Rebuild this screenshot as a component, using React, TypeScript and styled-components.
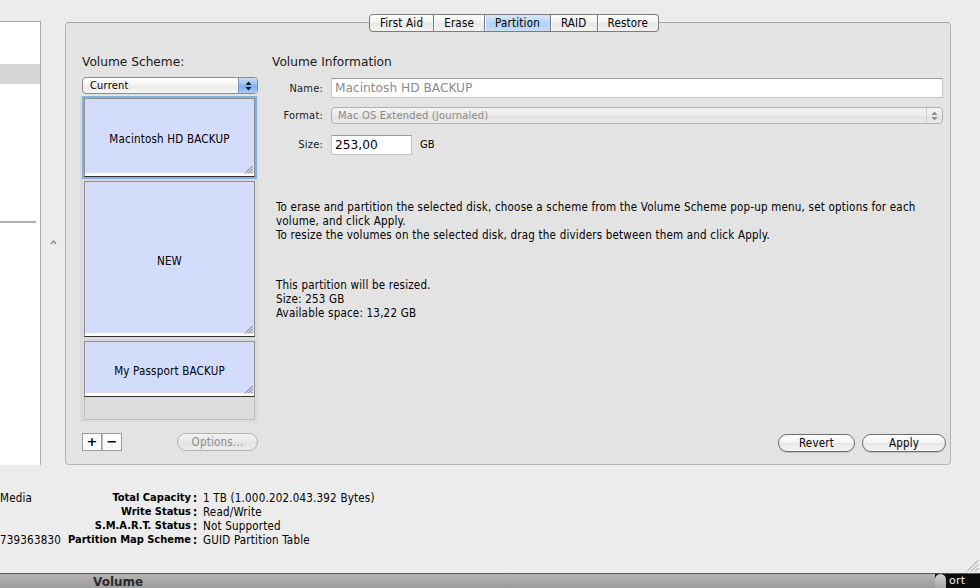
import React from "react";
import styled, { createGlobalStyle } from "styled-components";

const GlobalStyle = createGlobalStyle`
  html, body {
    margin: 0;
    padding: 0;
    background: #ececec;
  }
  body {
    font-family: "DejaVu Sans Condensed", "DejaVu Sans", sans-serif;
    font-size: 11.5px;
    letter-spacing: 0.2px;
    color: #000;
    overflow: hidden;
  }
`;

const tabs = ["First Aid", "Erase", "Partition", "RAID", "Restore"];

const partitions = [
  { name: "Macintosh HD BACKUP", height: 79, selected: true },
  { name: "NEW", height: 156, selected: false },
  { name: "My Passport BACKUP", height: 56, selected: false },
];

const infoRows = [
  { left: "Media", label: "Total Capacity", value: "1 TB (1.000.202.043.392 Bytes)" },
  { left: "", label: "Write Status", value: "Read/Write" },
  { left: "", label: "S.M.A.R.T. Status", value: "Not Supported" },
  { left: "739363830", label: "Partition Map Scheme", value: "GUID Partition Table" },
];

const Arrows = ({ color }: { color: string }) => (
  <svg width="7" height="10" viewBox="0 0 7 10">
    <path d="M3.5 0.5 L6.5 4 L0.5 4 Z" fill={color} />
    <path d="M3.5 9.5 L6.5 6 L0.5 6 Z" fill={color} />
  </svg>
);

const Grip = () => (
  <svg width="9" height="9" viewBox="0 0 9 9">
    <path d="M8.5 1 L1 8.5 M8.5 4 L4 8.5 M8.5 7 L7 8.5" stroke="#6b6b6b" strokeWidth="1" />
  </svg>
);

const App = () => {
  return (
    <>
      <GlobalStyle />
      <Page>
        <Window>
          <TopRow>
            <Sidebar>
              <SidebarRow />
              <SidebarRow selected />
              <SidebarSeparator />
            </Sidebar>
            <Gutter>
              <svg width="7" height="5" viewBox="0 0 7 5">
                <path d="M1 4 L3.5 1 L6 4" stroke="#8a8a8a" strokeWidth="1.4" fill="none" />
              </svg>
            </Gutter>
            <TabView>
              <TabBar>
                {tabs.map((t) => (
                  <Tab key={t} active={t === "Partition"}>
                    {t}
                  </Tab>
                ))}
              </TabBar>
              <Panel>
                <LeftColumn>
                  <Heading inset>Volume Scheme:</Heading>
                  <Popup>
                    <span>Current</span>
                    <PopupArrows>
                      <Arrows color="#1a1a1a" />
                    </PopupArrows>
                  </Popup>
                  <PartitionMap>
                    {partitions.map((p) => (
                      <PartitionBlock key={p.name} selected={p.selected} style={{ height: p.height }}>
                        {p.name}
                        <BlockGrip>
                          <Grip />
                        </BlockGrip>
                      </PartitionBlock>
                    ))}
                    <FreeSpace />
                  </PartitionMap>
                  <MapFooter>
                    <SquareButtons>
                      <SquareButton>+</SquareButton>
                      <SquareButton>−</SquareButton>
                    </SquareButtons>
                    <PillButton disabled width={79}>
                      Options...
                    </PillButton>
                  </MapFooter>
                </LeftColumn>
                <RightColumn>
                  <Heading>Volume Information</Heading>
                  <Form>
                    <FieldLabel>Name:</FieldLabel>
                    <TextField dimmed>Macintosh HD BACKUP</TextField>
                    <FieldLabel>Format:</FieldLabel>
                    <FormatPopup>
                      <span>Mac OS Extended (Journaled)</span>
                      <FormatArrows>
                        <Arrows color="#8c8c8c" />
                      </FormatArrows>
                    </FormatPopup>
                    <FieldLabel>Size:</FieldLabel>
                    <SizeRow>
                      <TextField width={81}>253,00</TextField>
                      <Unit>GB</Unit>
                    </SizeRow>
                  </Form>
                  <Note>
                    To erase and partition the selected disk, choose a scheme from the Volume Scheme pop-up menu, set
                    options for each volume, and click Apply.
                    <br />
                    To resize the volumes on the selected disk, drag the dividers between them and click Apply.
                  </Note>
                  <Details>
                    This partition will be resized.
                    <br />
                    Size: 253 GB
                    <br />
                    Available space: 13,22 GB
                  </Details>
                  <ActionRow>
                    <PillButton width={75}>Revert</PillButton>
                    <PillButton width={82}>Apply</PillButton>
                  </ActionRow>
                </RightColumn>
              </Panel>
            </TabView>
          </TopRow>
          <InfoGrid>
            {infoRows.map((r) => (
              <React.Fragment key={r.label}>
                <InfoLeft>{r.left}</InfoLeft>
                <InfoLabel>{r.label}</InfoLabel>
                <InfoColon>:</InfoColon>
                <InfoValue>{r.value}</InfoValue>
              </React.Fragment>
            ))}
          </InfoGrid>
          <WindowGrip>
            <svg width="14" height="13" viewBox="0 0 14 13">
              <path d="M13.5 1 L2 12.5 M13.5 5 L6 12.5 M13.5 9 L10 12.5" stroke="#9a9a9a" strokeWidth="1" />
            </svg>
          </WindowGrip>
        </Window>
        <BottomBar>
          <BarTitle>Volume</BarTitle>
          <DockBit>
            <DockKnob />
            <DockLabel>ort</DockLabel>
          </DockBit>
        </BottomBar>
      </Page>
    </>
  );
};

const Page = styled.div`
  width: 980px;
  height: 588px;
  display: flex;
  flex-direction: column;
  overflow: hidden;
`;

const Window = styled.div`
  position: relative;
  height: 573px;
  background: #ececec;
  border-bottom: 1px solid #5a5a5a;
`;

const TopRow = styled.div`
  display: flex;
  align-items: flex-start;
  height: 465px;
`;

const Sidebar = styled.div`
  margin-top: 21px;
  width: 40px;
  height: 443px;
  background: #fff;
  border-top: 1px solid #a9a9a9;
  border-right: 1px solid #a9a9a9;
  display: flex;
  flex-direction: column;
`;

const SidebarRow = styled.div<{ selected?: boolean }>`
  height: ${(p) => (p.selected ? "20px" : "42px")};
  background: ${(p) => (p.selected ? "#d6d6d6" : "#fff")};
`;

const SidebarSeparator = styled.div`
  margin-top: 137px;
  width: 36px;
  height: 2px;
  background: #b0b0b0;
`;

const Gutter = styled.div`
  width: 24px;
  height: 465px;
  display: flex;
  justify-content: center;
  padding-top: 240px;
  box-sizing: border-box;
`;

const TabView = styled.div`
  width: 886px;
  display: flex;
  flex-direction: column;
`;

const TabBar = styled.div`
  position: relative;
  z-index: 1;
  margin-top: 14px;
  padding-left: 12px;
  display: flex;
  justify-content: center;
`;

const Tab = styled.div<{ active?: boolean }>`
  height: 16px;
  line-height: 16px;
  padding: 0 10px;
  border: 1px solid #7b7b7b;
  border-left-width: 0;
  background: ${(p) =>
    p.active
      ? "linear-gradient(#d7e9fb, #b3d3f4 55%, #c3def8)"
      : "linear-gradient(#ffffff, #f1f1f1 50%, #e6e6e6 51%, #f4f4f4)"};
  color: #000;
  &:first-child {
    border-left-width: 1px;
    border-radius: 4px 0 0 4px;
  }
  &:last-child {
    border-radius: 0 4px 4px 0;
  }
  & + & {
    box-shadow: inset 1px 0 0 #ffffff;
  }
`;

const Panel = styled.div`
  margin-top: -10px;
  height: 443px;
  box-sizing: border-box;
  background: #e3e3e3;
  border: 1px solid #b4b4b4;
  border-top-color: #a6a6a6;
  border-radius: 4px;
  padding: 31px 7px 12px 14px;
  display: flex;
  gap: 14px;
`;

const LeftColumn = styled.div`
  width: 178px;
  display: flex;
  flex-direction: column;
`;

const RightColumn = styled.div`
  flex: 1;
  display: flex;
  flex-direction: column;
`;

const Heading = styled.div<{ inset?: boolean }>`
  font-family: "DejaVu Sans", sans-serif;
  font-size: 12.2px;
  letter-spacing: 0;
  line-height: 16px;
  height: 16px;
  padding-left: ${(p) => (p.inset ? "2px" : "0")};
  color: #1a1a1a;
`;

const Popup = styled.div`
  margin: 7px 0 0 2px;
  height: 15px;
  border: 1px solid #8c8c8c;
  border-radius: 4px;
  background: linear-gradient(#ffffff, #f3f3f3 50%, #e9e9e9 51%, #f7f7f7);
  display: flex;
  align-items: center;
  justify-content: space-between;
  padding-left: 7px;
  overflow: hidden;
  font-size: 11px;
`;

const PopupArrows = styled.div`
  width: 18px;
  height: 15px;
  display: flex;
  align-items: center;
  justify-content: center;
  background: linear-gradient(#c9def7, #8fbaee 50%, #78aae9 51%, #a9cdf5);
  border-left: 1px solid #7b97bd;
`;

const PartitionMap = styled.div`
  margin-top: 2px;
  height: 326px;
  box-sizing: border-box;
  background: #dadada;
  padding: 2px 3px 2px 4px;
  display: flex;
  flex-direction: column;
  gap: 4px;
`;

const PartitionBlock = styled.div<{ selected?: boolean }>`
  position: relative;
  box-sizing: border-box;
  flex-shrink: 0;
  background: #d3dcfa;
  border: 1px solid #8e8e8e;
  border-bottom: 1px solid #2f2f2f;
  box-shadow: inset 0 -3px 0 #ffffff ${(p) => (p.selected ? ", 0 0 0 2px #86aee3" : "")};
  display: flex;
  align-items: center;
  justify-content: center;
  padding-top: 3px;
  color: #000;
`;

const BlockGrip = styled.div`
  position: absolute;
  right: 1px;
  bottom: 2px;
  width: 9px;
  height: 9px;
  display: flex;
`;

const FreeSpace = styled.div`
  flex: 1;
  margin-top: -4px;
  background: #dcdcdc;
  border: 1px solid #bdbdbd;
  border-top: 0;
`;

const MapFooter = styled.div`
  margin-top: 11px;
  padding-left: 2px;
  display: flex;
  align-items: center;
  justify-content: space-between;
`;

const SquareButtons = styled.div`
  display: flex;
`;

const SquareButton = styled.div`
  width: 18px;
  height: 16px;
  line-height: 15px;
  text-align: center;
  background: #fbfbfb;
  border: 1px solid #9c9c9c;
  font-family: "DejaVu Sans", sans-serif;
  font-weight: bold;
  font-size: 13px;
  letter-spacing: 0;
  & + & {
    border-left: 1px solid #c0c0c0;
  }
`;

const PillButton = styled.div<{ width: number; disabled?: boolean }>`
  width: ${(p) => p.width}px;
  height: 16px;
  line-height: 17px;
  box-sizing: content-box;
  text-align: center;
  border-radius: 9px;
  border: 1px solid ${(p) => (p.disabled ? "#b2b2b2" : "#6d6d6d")};
  color: ${(p) => (p.disabled ? "#8e8e8e" : "#000")};
  background: ${(p) =>
    p.disabled
      ? "linear-gradient(#f2f2f2, #e9e9e9 50%, #e2e2e2 51%, #ececec)"
      : "linear-gradient(#ffffff, #f3f3f3 50%, #e6e6e6 51%, #f6f6f6)"};
  box-shadow: ${(p) => (p.disabled ? "none" : "0 1px 1px rgba(0,0,0,0.15)")};
`;

const Form = styled.div`
  margin-top: 8px;
  display: grid;
  grid-template-columns: 51px 1fr;
  column-gap: 8px;
  grid-template-rows: 20px 17px 20px;
  row-gap: 9px;
  align-items: center;
  & > :nth-child(5),
  & > :nth-child(6) {
    margin-top: 3px;
  }
`;

const FieldLabel = styled.div`
  text-align: right;
  font-size: 11px;
  color: #1a1a1a;
`;

const TextField = styled.div<{ dimmed?: boolean; width?: number }>`
  height: 20px;
  box-sizing: border-box;
  width: ${(p) => (p.width ? `${p.width}px` : "auto")};
  background: #fff;
  border: 1px solid #c4c4c4;
  border-top-color: #9a9a9a;
  padding-left: 3px;
  font-family: "DejaVu Sans", sans-serif;
  font-size: 12.2px;
  letter-spacing: 0;
  line-height: 18px;
  color: ${(p) => (p.dimmed ? "#8b8b8b" : "#000")};
`;

const FormatPopup = styled.div`
  height: 17px;
  box-sizing: border-box;
  border: 1px solid #b0b0b0;
  border-radius: 4px;
  background: linear-gradient(#f4f4f4, #ebebeb 50%, #e1e1e1 51%, #eaeaea);
  display: flex;
  align-items: center;
  justify-content: space-between;
  padding-left: 6px;
  color: #8a8a8a;
  font-size: 11px;
  overflow: hidden;
`;

const FormatArrows = styled.div`
  width: 15px;
  height: 15px;
  display: flex;
  align-items: center;
  justify-content: center;
  border-left: 1px solid #cfcfcf;
`;

const SizeRow = styled.div`
  display: flex;
  align-items: center;
  gap: 8px;
`;

const Unit = styled.span`
  font-size: 11px;
`;

const Note = styled.div`
  margin-top: 47px;
  padding-left: 4px;
  line-height: 14px;
  max-width: 650px;
`;

const Details = styled.div`
  margin-top: 36px;
  padding-left: 4px;
  line-height: 14px;
`;

const ActionRow = styled.div`
  margin-top: auto;
  margin-right: -3px;
  display: flex;
  justify-content: flex-end;
  gap: 7px;
`;

const InfoGrid = styled.div`
  margin-top: 26px;
  display: grid;
  grid-template-columns: 62px 129px 12px auto;
  grid-auto-rows: 14px;
  line-height: 14px;
  color: #000;
`;

const InfoLeft = styled.div`
  white-space: nowrap;
`;

const InfoLabel = styled.div`
  font-weight: bold;
  font-size: 11px;
  letter-spacing: 0;
  text-align: right;
  white-space: nowrap;
`;

const InfoColon = styled.div`
  padding-left: 2px;
  font-weight: bold;
`;

const InfoValue = styled.div`
  white-space: nowrap;
`;

const WindowGrip = styled.div`
  position: absolute;
  right: 1px;
  bottom: 1px;
  display: flex;
`;

const BottomBar = styled.div`
  height: 14px;
  background: linear-gradient(#b4b4b4, #9c9c9c);
  display: flex;
  align-items: center;
  justify-content: space-between;
`;

const BarTitle = styled.div`
  margin-left: 93px;
  font-family: "DejaVu Sans", sans-serif;
  font-weight: bold;
  font-size: 12px;
  letter-spacing: 0;
  line-height: 14px;
  padding-top: 2px;
  color: #2a2a2a;
`;

const DockBit = styled.div`
  width: 45px;
  height: 14px;
  display: flex;
  background: #0c0c0c;
`;

const DockKnob = styled.div`
  width: 11px;
  height: 14px;
  background: linear-gradient(#d4d4d4, #a6a6a6);
  border-radius: 6px 6px 0 0;
`;

const DockLabel = styled.div`
  padding-left: 3px;
  color: #f0f0f0;
  font-family: "DejaVu Sans", sans-serif;
  font-size: 11px;
  line-height: 14px;
`;

export default App;
